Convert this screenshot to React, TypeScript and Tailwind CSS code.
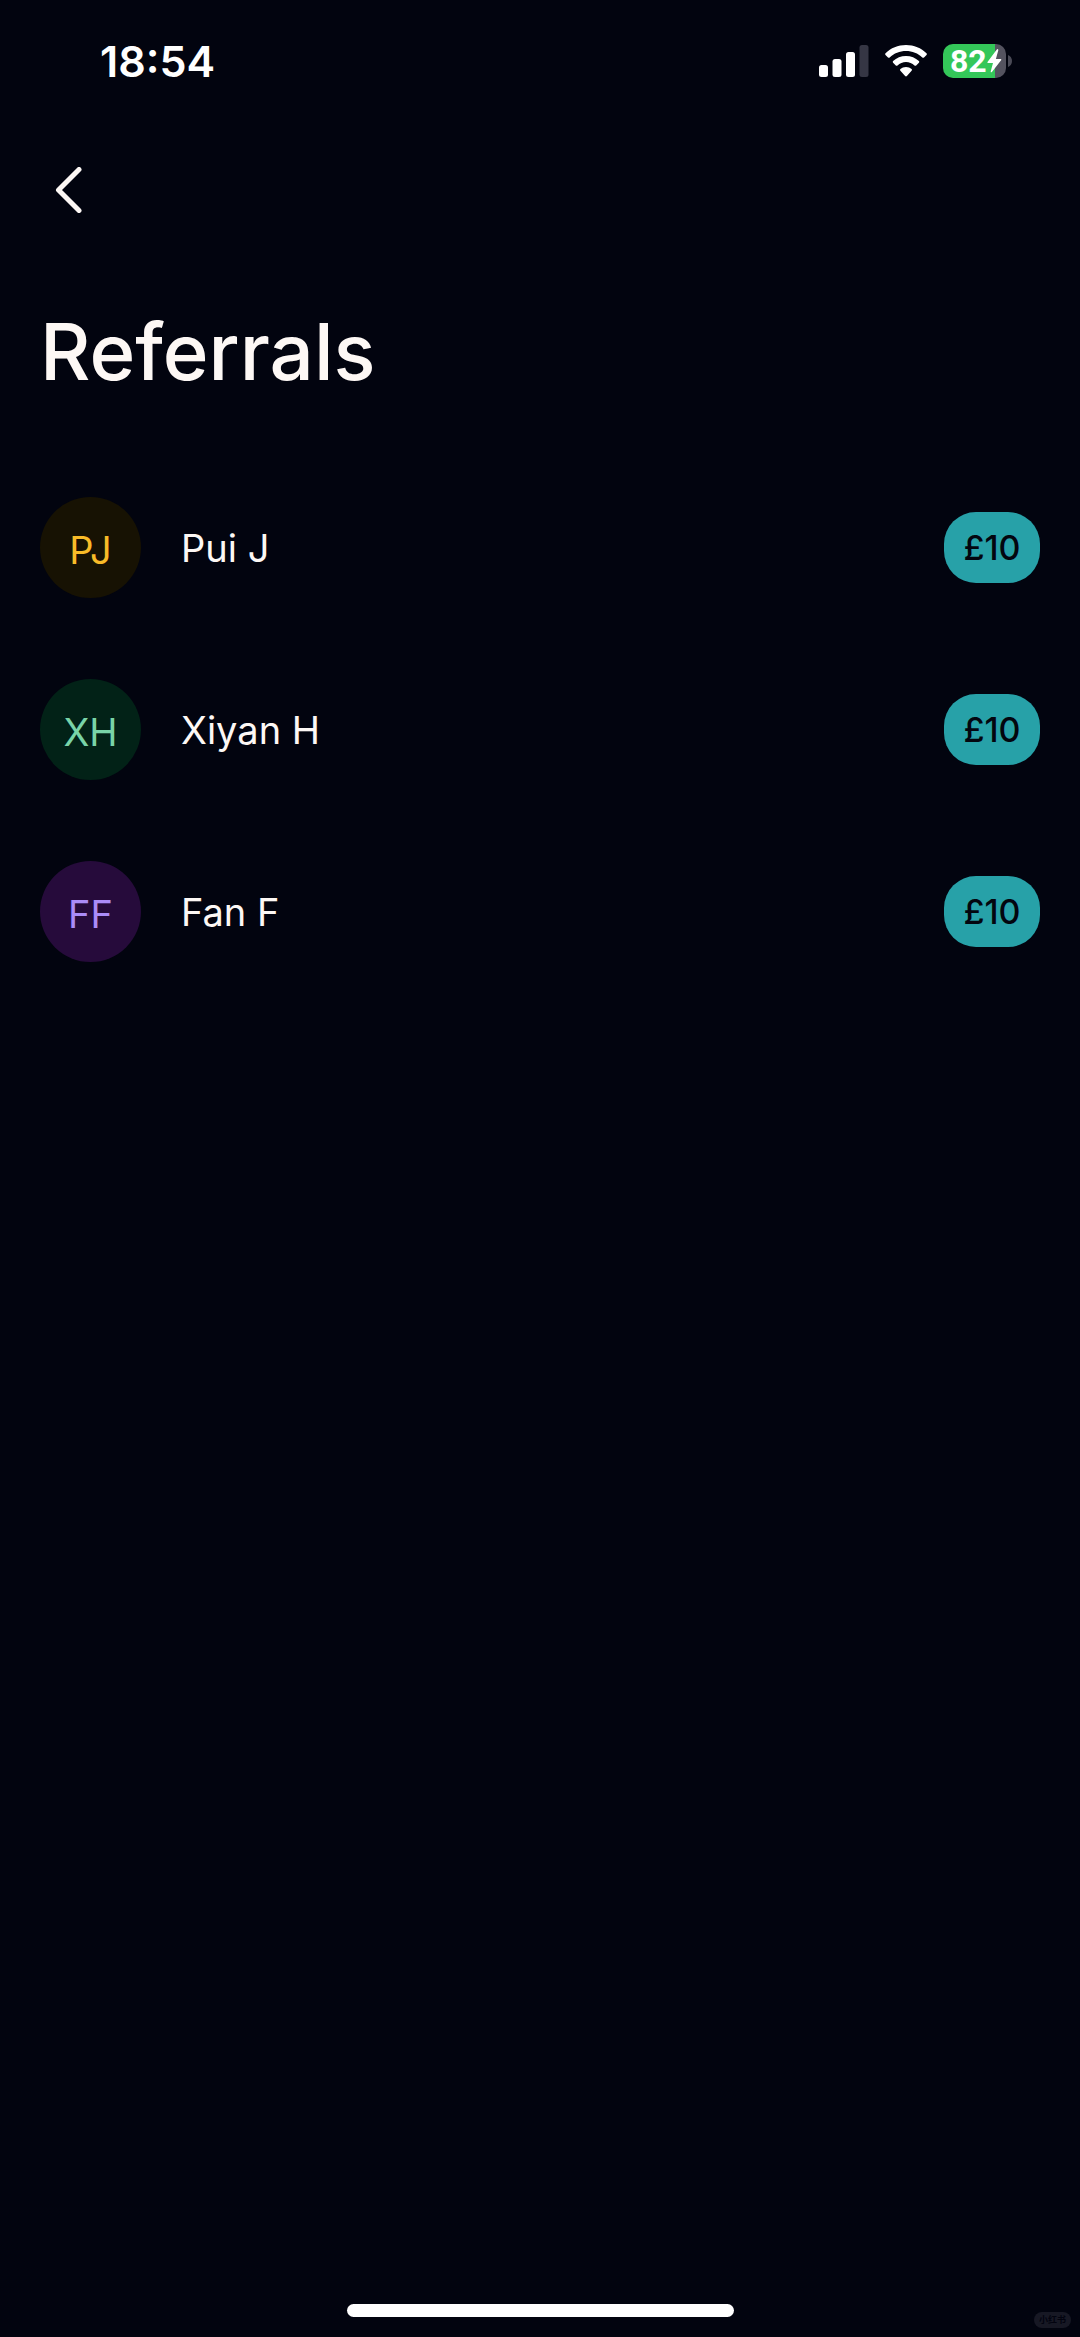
import React from 'react';

interface Referral {
  initials: string;
  name: string;
  reward: string;
  avatarClass: string;
}

const referrals: Referral[] = [
  { initials: 'PJ', name: 'Pui J', reward: '£10', avatarClass: 'bg-[#171203] text-[#f8bb28]' },
  { initials: 'XH', name: 'Xiyan H', reward: '£10', avatarClass: 'bg-[#022217] text-[#79d4a8]' },
  { initials: 'FF', name: 'Fan F', reward: '£10', avatarClass: 'bg-[#260b3b] text-[#ab8cf8]' },
];

function StatusBar() {
  return (
    <div className="flex h-[122px] items-center justify-between pr-[68px] pl-[100px] text-white">
      <span className="text-[43px] leading-[48px] font-semibold">18:54</span>
      <div className="flex items-center">
        {/* Signal */}
        <svg className="mr-4" width="50" height="34" viewBox="0 0 50 34" fill="currentColor">
          <rect x="0" y="21" width="9" height="12" rx="2.5" />
          <rect x="13.5" y="15" width="9" height="18" rx="2.5" />
          <rect x="27" y="8" width="9" height="25" rx="2.5" />
          <rect x="40.5" y="1" width="9" height="32" rx="2.5" fill="#353644" />
        </svg>

        {/* Wi-Fi */}
        <svg className="mr-4" width="42" height="34" viewBox="0 0 42 34" fill="currentColor">
          <path d="M21 1C13 1 5.800 4.100 .5 9.200c-.5.500-.5 1.200 0 1.700l2.500 2.500c.5.500 1.200.5 1.700 0C9 9.400 14.700 7 21 7s12 2.400 16.300 6.400c.5.500 1.200.5 1.700 0l2.500-2.500c.5-.5.500-1.200 0-1.700C36.200 4.100 29 1 21 1z" />
          <path d="M21 12c-5 0-9.500 1.900-12.900 5-.5.500-.5 1.200 0 1.700l2.700 2.700c.5.500 1.200.5 1.700 0 2.300-2 5.200-3.300 8.500-3.300s6.200 1.300 8.500 3.300c.5.500 1.200.5 1.700 0l2.700-2.700c.5-.5.500-1.200 0-1.700-3.400-3.100-7.900-5-12.900-5z" />
          <path d="M21 23c-2.200 0-4.100.8-5.600 2.100-.5.500-.5 1.200 0 1.700l4.700 5.300c.5.600 1.300.6 1.800 0l4.700-5.300c.5-.5.500-1.200 0-1.700C25.100 23.800 23.200 23 21 23z" />
        </svg>

        {/* Battery */}
        <div className="flex items-center gap-[2px]">
          <div className="flex h-[34px] w-[63px] items-center rounded-[10px] bg-linear-to-r from-[#34c759] from-83% to-[#54535f] to-83% pl-[7px]">
            <span className="font-['Roboto',sans-serif] text-[32px] leading-[34px] font-bold">82</span>
            <svg width="15" height="24" viewBox="0 0 15 24" fill="currentColor">
              <path d="M9.800 .5 L.5 13.100 Q.2 14 1.200 14 H6 L3.700 22.500 Q3.700 23.900 4.900 23 L14.300 10.900 Q14.700 10 13.600 10 H8.900 L11.300 1.300 Q11.200 -.6 9.800 .5z" />
            </svg>
          </div>
          <svg width="4" height="12" viewBox="0 0 4 12" fill="#4a4a56">
            <path d="M0 0C2.500 1 4 3.300 4 6S2.500 11 0 12z" />
          </svg>
        </div>
      </div>
    </div>
  );
}

function ReferralRow({ initials, name, reward, avatarClass }: Referral) {
  return (
    <li className="flex items-center justify-between">
      <div className="flex items-center gap-10">
        <div className={`flex size-[101px] items-center justify-center rounded-full pt-[4px] text-[38px] leading-[48px] ${avatarClass}`}>
          {initials}
        </div>
        <span className="text-[38px] leading-[48px] text-[#fdf8f5]">{name}</span>
      </div>
      <span className="flex h-[71px] w-24 items-center justify-center rounded-[32px] bg-[#27a1a8] text-[34px] leading-[48px] font-medium text-[#03060f]">
        {reward}
      </span>
    </li>
  );
}

export default function App() {
  return (
    <div className="relative flex min-h-screen flex-col bg-[#02040f] font-['Inter','Liberation_Sans',sans-serif]">
      <StatusBar />

      <main className="flex flex-1 flex-col px-10">
        <button type="button" aria-label="Back" className="mt-9 size-16 pl-[14px] text-[#fdf8f5]">
          <svg width="28" height="46" viewBox="0 0 28 46" fill="none" stroke="currentColor" strokeWidth="5" strokeLinecap="round" strokeLinejoin="round">
            <path d="M25 2.500 4.500 23 25 43.500" />
          </svg>
        </button>

        <h1 className="mt-[82px] text-[78px] leading-[96px] font-medium text-[#fdf8f5]">Referrals</h1>

        <ul className="mt-[97px] flex flex-col gap-[81px]">
          {referrals.map((r) => (
            <ReferralRow key={r.initials} {...r} />
          ))}
        </ul>
      </main>

      {/* Home indicator */}
      <div className="flex justify-center pb-5">
        <div className="h-[13px] w-[387px] rounded-full bg-white" />
      </div>

      <span className="absolute right-[9px] bottom-[9px] flex h-4 w-[37px] items-center justify-center rounded-full bg-[#171824] font-['Noto_Sans_CJK_SC',sans-serif] text-[9px] leading-4 font-bold text-[#02030f]">
        小红书
      </span>
    </div>
  );
}
